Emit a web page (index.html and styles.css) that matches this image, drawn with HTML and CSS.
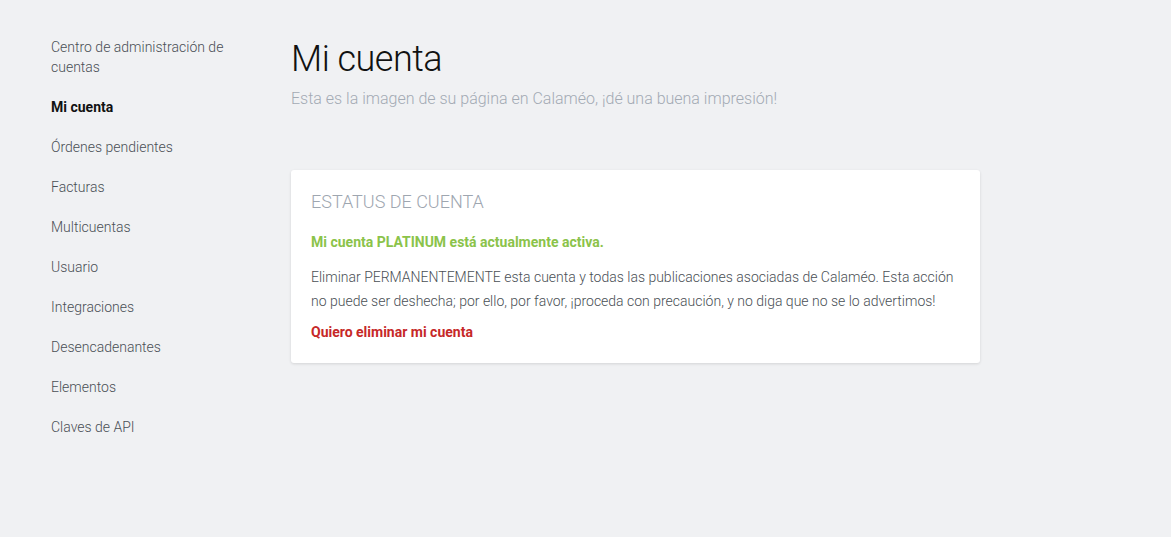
FILE: index.html
```html
<!DOCTYPE html>
<html lang="es">
<head>
    <meta charset="UTF-8">
    <meta name="viewport" content="width=device-width, initial-scale=1.0">
    <title>Mi cuenta</title>
    <link rel="stylesheet" href="styles.css">
</head>
<body>
    <div class="page">
        <!-- Sidebar navigation -->
        <nav class="sidebar">
            <a class="nav-item" href="#">Centro de administración de cuentas</a>
            <a class="nav-item active" href="#">Mi cuenta</a>
            <a class="nav-item" href="#">Órdenes pendientes</a>
            <a class="nav-item" href="#">Facturas</a>
            <a class="nav-item" href="#">Multicuentas</a>
            <a class="nav-item" href="#">Usuario</a>
            <a class="nav-item" href="#">Integraciones</a>
            <a class="nav-item" href="#">Desencadenantes</a>
            <a class="nav-item" href="#">Elementos</a>
            <a class="nav-item" href="#">Claves de API</a>
        </nav>

        <!-- Main content -->
        <main class="content">
            <h1 class="page-title">Mi cuenta</h1>
            <p class="page-subtitle">Esta es la imagen de su página en Calaméo, ¡dé una buena impresión!</p>

            <section class="card">
                <h2 class="card-title">Estatus de cuenta</h2>
                <p class="status-active">Mi cuenta PLATINUM está actualmente activa.</p>
                <p class="card-text">Eliminar PERMANENTEMENTE esta cuenta y todas las publicaciones asociadas de Calaméo. Esta acción no puede ser deshecha; por ello, por favor, ¡proceda con precaución, y no diga que no se lo advertimos!</p>
                <a class="delete-link" href="#">Quiero eliminar mi cuenta</a>
            </section>
        </main>
    </div>
</body>
</html>
```

FILE: styles.css
```css
/* Base */
body {
    margin: 0;
    padding: 0;
    font-family: Roboto, 'Noto Sans', sans-serif;
    background-color: #f0f1f3;
    color: #555;
}

.page {
    display: flex;
    gap: 40px;
    padding: 37px 51px;
}

/* Sidebar */
.sidebar {
    width: 200px;
    flex-shrink: 0;
    display: flex;
    flex-direction: column;
    gap: 20px;
}

.nav-item {
    font-size: 14px;
    line-height: 20px;
    font-weight: 300;
    color: #4a4f55;
    text-decoration: none;
}

.nav-item.active {
    font-weight: 700;
    color: #111;
}

/* Main content */
.content {
    flex: 1;
    max-width: 689px;
}

.page-title {
    margin: 0;
    font-size: 36px;
    line-height: 44px;
    font-weight: 300;
    letter-spacing: -0.5px;
    color: #111;
}

.page-subtitle {
    margin: 6px 0 0;
    font-size: 16px;
    line-height: 24px;
    font-weight: 300;
    color: #a3aab3;
}

/* Card */
.card {
    margin-top: 59px;
    background: #fff;
    border-radius: 3px;
    box-shadow: 0 1px 3px rgba(0,0,0,0.12);
    padding: 21px 20px 19px;
}

.card-title {
    margin: 0;
    font-size: 18px;
    line-height: 22px;
    font-weight: 300;
    text-transform: uppercase;
    color: #9ea6b0;
}

.status-active {
    margin: 17px 0 0;
    font-size: 14px;
    line-height: 24px;
    font-weight: 700;
    color: #8bc34a;
}

.card-text {
    margin: 11px 0 0;
    font-size: 14px;
    line-height: 24px;
    font-weight: 300;
    color: #4a4f55;
}

.delete-link {
    display: block;
    margin-top: 7px;
    font-size: 14px;
    line-height: 24px;
    font-weight: 700;
    color: #c62828;
    text-decoration: none;
}
```
